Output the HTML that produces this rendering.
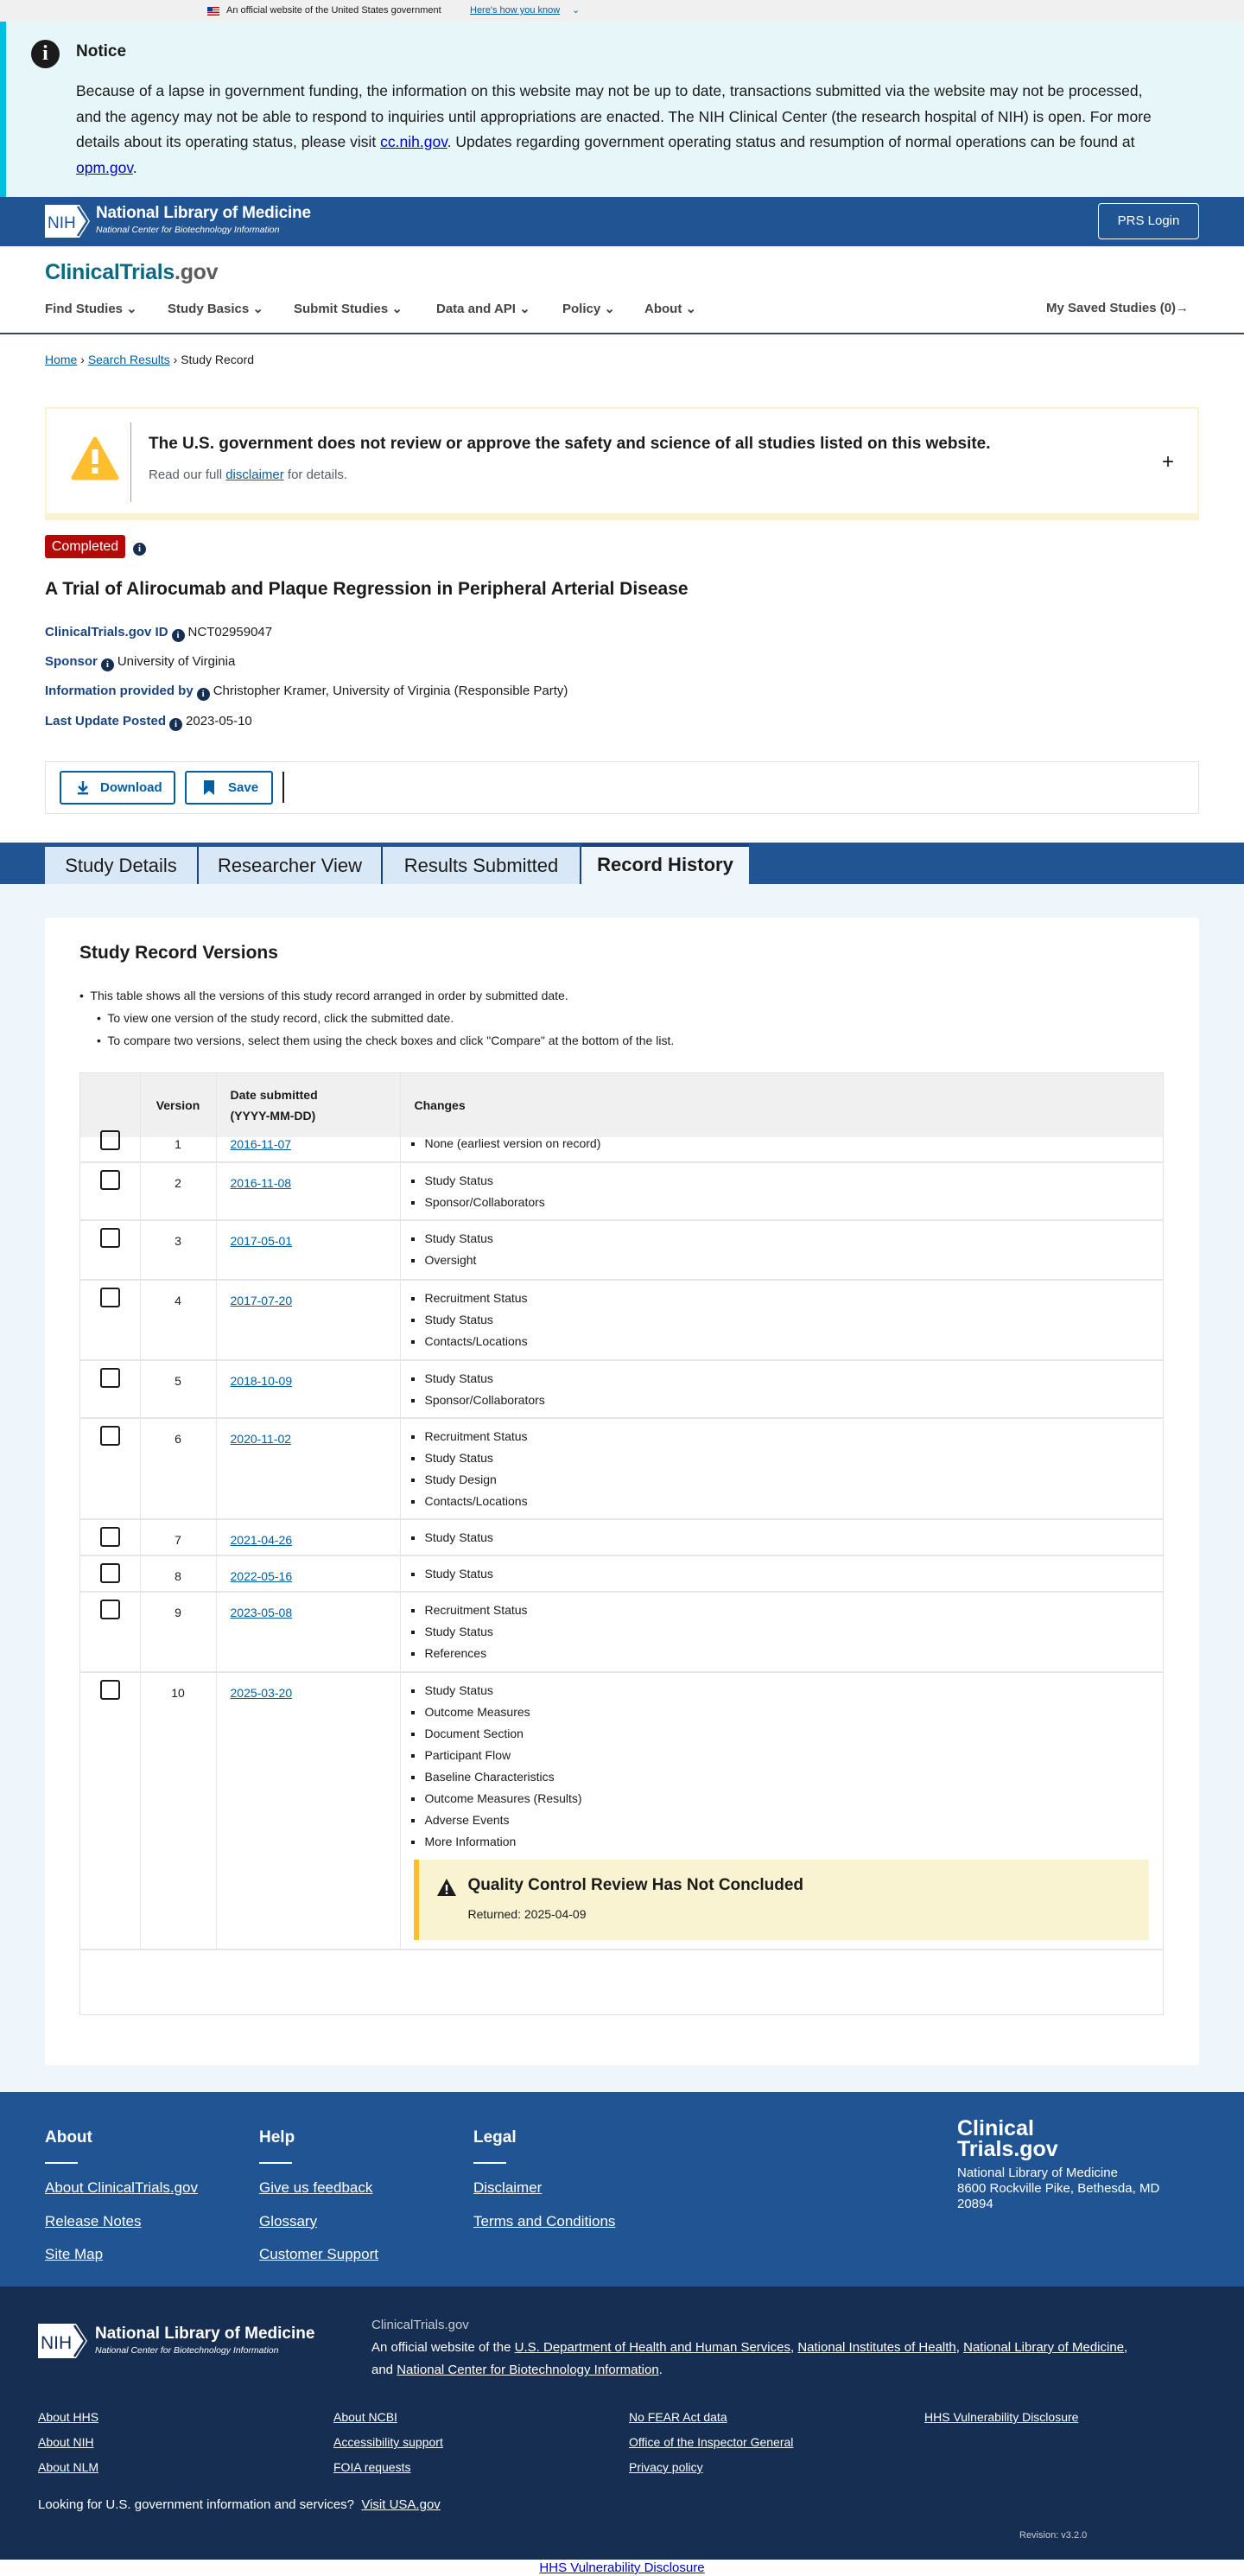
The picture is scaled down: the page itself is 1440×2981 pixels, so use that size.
<!DOCTYPE html>
<html><head><meta charset="utf-8">
<style>
*{box-sizing:border-box;margin:0;padding:0}
body{width:1440px;height:2981px;position:relative;font-family:"Liberation Sans",Arial,sans-serif;color:#1b1b1b;background:#fff;overflow:hidden}
.abs{position:absolute}
a{color:#005ea2}
.gov{left:0;top:0;width:1440px;height:25px;background:#f0f0f0;font-size:11px;line-height:25px}
.notice{left:0;top:25px;width:1440px;height:203px;background:#e7f6f8;border-left:7px solid #00bde3}
.nih{left:0;top:228px;width:1440px;height:57px;background:#205493}
.nav{font-size:15px;font-weight:bold;color:#454545}
.lbl{color:#1a4480;font-weight:bold;font-size:15px}
.ii{display:inline-block;width:15px;height:15px;border-radius:50%;background:#162e51;color:#fff;font-size:11px;line-height:15px;text-align:center;font-weight:bold;font-family:"Liberation Serif",serif;vertical-align:-2px;margin:0 4px}
.tab{position:absolute;top:980px;height:43px;background:#d9e8f6;border-right:2px solid #1a4480;font-size:22px;line-height:43px;text-align:center;color:#1b1b1b}
table{border-collapse:collapse;table-layout:fixed}
td,th{vertical-align:top;border-right:1px solid #e6e6e6;font-size:14px}
tr.r td{border-bottom:2px solid #e6e6e6}
td ul{list-style:none;padding:8px 0 0 28px}
td li{line-height:25px;position:relative;font-size:14px}
td li:before{content:"";position:absolute;left:-16px;top:11px;width:4px;height:4px;background:#1b1b1b}
.cb{width:23px;height:23px;border:2px solid #1b1b1b;border-radius:3px;margin:8px 0 0 23px}
.vn{text-align:center;padding-top:15px}
.dt{padding:15px 0 0 16px}
.dt a{color:#005ea2}
.fl a{color:#fff;font-size:17px}
.fd a{color:#fff;font-size:14px}
</style></head><body>

<div class="abs gov"><span style="position:absolute;left:240px;top:8px;width:14px;height:10px;background:repeating-linear-gradient(#c00 0 1.4px,#fff 1.4px 2.8px)"><span style="position:absolute;left:0;top:0;width:6px;height:5px;background:#1a3a8a"></span></span><span style="position:absolute;left:262px">An official website of the United States government</span><span style="position:absolute;left:544px;color:#005ea2;text-decoration:underline">Here's how you know</span><span style="position:absolute;left:662px;color:#005ea2">⌄</span></div>

<div class="abs notice">
 <div class="abs" style="left:29px;top:21px;width:33px;height:33px;border-radius:50%;background:#1b1b1b;color:#fff;text-align:center;font:bold 24px/33px 'Liberation Serif',serif">i</div>
 <div class="abs" style="left:81px;top:24px;font-size:19px;font-weight:bold">Notice</div>
 <div class="abs" style="left:81px;top:66px;width:1268px;font-size:17.5px;line-height:29.5px">Because of a lapse in government funding, the information on this website may not be up to date, transactions submitted via the website may not be processed, and the agency may not be able to respond to inquiries until appropriations are enacted. The NIH Clinical Center (the research hospital of NIH) is open. For more details about its operating status, please visit <a href="#" style="color:#0000cc">cc.nih.gov</a>. Updates regarding government operating status and resumption of normal operations can be found at <a href="#" style="color:#0000cc">opm.gov</a>.</div>
</div>

<div class="abs nih">
 <svg class="abs" style="left:52px;top:9px" width="54" height="38" viewBox="0 0 54 38"><path d="M0 0H40L52 19L40 38H0Z" fill="#fff"/><path d="M38 2L49 19L38 36" stroke="#205493" stroke-width="2.5" fill="none"/><text x="3" y="27" font-family="Liberation Sans" font-size="19" fill="#205493">NIH</text></svg>
 <div class="abs" style="left:111px;top:8px;color:#fff;font-size:19px;font-weight:bold;letter-spacing:-.2px">National Library of Medicine</div>
 <div class="abs" style="left:111px;top:32px;color:#fff;font-size:10.5px;font-style:italic">National Center for Biotechnology Information</div>
 <div class="abs" style="left:1271px;top:7px;width:117px;height:42px;border:1.5px solid #fff;border-radius:4px;color:#fff;font-size:15px;text-align:center;line-height:39px">PRS Login</div>
</div>

<div class="abs" style="left:52px;top:301px;font-size:25px;font-weight:bold;color:#0b6a80;letter-spacing:-.3px">ClinicalTrials<span style="color:#5c5c5c;font-weight:bold">.gov</span></div>
<div class="abs nav" style="left:52px;top:348px">Find Studies ⌄</div>
<div class="abs nav" style="left:194px;top:348px">Study Basics ⌄</div>
<div class="abs nav" style="left:340px;top:348px">Submit Studies ⌄</div>
<div class="abs nav" style="left:505px;top:348px">Data and API ⌄</div>
<div class="abs nav" style="left:651px;top:348px">Policy ⌄</div>
<div class="abs nav" style="left:746px;top:348px">About ⌄</div>
<div class="abs nav" style="left:1211px;top:348px">My Saved Studies (0)→</div>
<div class="abs" style="left:0;top:385px;width:1440px;height:2px;background:#3d4551"></div>
<div class="abs" style="left:52px;top:408px;font-size:14px"><a href="#">Home</a> › <a href="#">Search Results</a> › Study Record</div>

<div class="abs" style="left:52px;top:471px;width:1336px;height:131px;border:2px solid #faf3d1;border-bottom:8px solid #faf3d1;background:#fff">
 <svg class="abs" style="left:28px;top:32px" width="56" height="52" viewBox="0 0 56 52"><path d="M28 3L53 48H3Z" fill="#ffbe2e" stroke="#ffbe2e" stroke-width="5" stroke-linejoin="round"/><rect x="24.5" y="15" width="7" height="17" fill="#fff"/><rect x="24.5" y="36" width="7" height="7" fill="#fff"/></svg>
 <div class="abs" style="left:97px;top:16px;width:1px;height:92px;background:#e5a000"></div>
 <div class="abs" style="left:118px;top:30px;font-size:19px;font-weight:bold">The U.S. government does not review or approve the safety and science of all studies listed on this website.</div>
 <div class="abs" style="left:118px;top:68px;font-size:15px;color:#565c65">Read our full <a href="#" style="color:#005ea2">disclaimer</a> for details.</div>
 <div class="abs" style="left:1291px;top:48px;font-size:24px">+</div>
</div>

<div class="abs" style="left:52px;top:619px;width:93px;height:27px;background:#b50909;border-radius:3px;color:#fff;font-size:16px;line-height:27px;text-align:center">Completed</div>
<div class="abs" style="left:150px;top:623px"><span class="ii">i</span></div>
<div class="abs" style="left:52px;top:670px;font-size:21px;font-weight:bold;color:#1b1b1b">A Trial of Alirocumab and Plaque Regression in Peripheral Arterial Disease</div>
<div class="abs" style="left:52px;top:723px;font-size:15px"><span class="lbl">ClinicalTrials.gov ID</span><span class="ii">i</span>NCT02959047</div>
<div class="abs" style="left:52px;top:757px;font-size:15px"><span class="lbl">Sponsor</span><span class="ii">i</span>University of Virginia</div>
<div class="abs" style="left:52px;top:791px;font-size:15px"><span class="lbl">Information provided by</span><span class="ii">i</span>Christopher Kramer, University of Virginia (Responsible Party)</div>
<div class="abs" style="left:52px;top:826px;font-size:15px"><span class="lbl">Last Update Posted</span><span class="ii">i</span>2023-05-10</div>

<div class="abs" style="left:52px;top:881px;width:1336px;height:61px;border:1px solid #dfe1e2"></div>
<div class="abs" style="left:69px;top:892px;width:134px;height:39px;border:2px solid #005ea2;border-radius:3px;color:#005ea2;font-size:15px;font-weight:bold;line-height:35px;padding-left:45px">Download</div>
<svg class="abs" style="left:89px;top:903px" width="14" height="17" viewBox="0 0 14 17"><path d="M7 1V11M2 7L7 12L12 7" stroke="#005ea2" stroke-width="2.4" fill="none"/><rect x="1" y="14" width="12" height="2.4" fill="#005ea2"/></svg>
<div class="abs" style="left:214px;top:892px;width:102px;height:39px;border:2px solid #005ea2;border-radius:3px;color:#005ea2;font-size:15px;font-weight:bold;line-height:35px;padding-left:48px">Save</div>
<svg class="abs" style="left:236px;top:903px" width="12" height="17" viewBox="0 0 12 17"><path d="M0 0H12V17L6 12L0 17Z" fill="#005ea2"/></svg>
<div class="abs" style="left:327px;top:893px;width:2px;height:36px;background:#1b1b1b"></div>

<div class="abs" style="left:0;top:975px;width:1440px;height:48px;background:#205493"></div>
<div class="abs" style="left:0;top:1023px;width:1440px;height:1398px;background:#eff6fb"></div>
<div class="tab" style="left:52px;width:178px">Study Details</div>
<div class="tab" style="left:230px;width:213px">Researcher View</div>
<div class="tab" style="left:443px;width:230px">Results Submitted</div>
<div class="abs" style="left:673px;top:976px;width:194px;height:48px;background:#eff6fb;border-top:4px solid #1a4480;font-size:22px;font-weight:bold;line-height:42px;text-align:center">Record History</div>

<div class="abs" style="left:52px;top:1062px;width:1336px;height:1328px;background:#fff;border-radius:4px">
 <div class="abs" style="left:40px;top:29px;font-size:21px;font-weight:bold">Study Record Versions</div>
 <div class="abs" style="left:40px;top:77px;font-size:14px;line-height:26px">
  <div>•&nbsp; This table shows all the versions of this study record arranged in order by submitted date.</div>
  <div style="padding-left:20px">•&nbsp; To view one version of the study record, click the submitted date.</div>
  <div style="padding-left:20px">•&nbsp; To compare two versions, select them using the check boxes and click "Compare" at the bottom of the list.</div>
 </div>
 <div class="abs" style="left:40px;top:179px;width:1255px;height:1091px;border:1px solid #dfe1e2;overflow:hidden">
 <table style="width:1254px">
  <colgroup><col style="width:69px"><col style="width:88px"><col style="width:213px"><col></colgroup>
  <tr style="height:74px;background:#f0f0f0"><th></th><th style="vertical-align:middle;text-align:center">Version</th><th style="vertical-align:middle;text-align:left;padding-left:16px;line-height:24px">Date submitted<br>(YYYY-MM-DD)</th><th style="vertical-align:middle;text-align:left;padding-left:16px;border-right:0">Changes</th></tr>
  <tr class="r" style="height:29px"><td><div class="cb" style="margin-top:-8px"></div></td><td class="vn" style="padding-top:0">1</td><td class="dt" style="padding-top:0"><a href="#">2016-11-07</a></td><td><ul style="padding-top:0"><li style="margin-top:-5px">None (earliest version on record)</li></ul></td></tr>
  <tr class="r" style="height:67px"><td><div class="cb"></div></td><td class="vn">2</td><td class="dt"><a href="#">2016-11-08</a></td><td><ul><li>Study Status</li><li>Sponsor/Collaborators</li></ul></td></tr>
  <tr class="r" style="height:69px"><td><div class="cb"></div></td><td class="vn">3</td><td class="dt"><a href="#">2017-05-01</a></td><td><ul><li>Study Status</li><li>Oversight</li></ul></td></tr>
  <tr class="r" style="height:93px"><td><div class="cb"></div></td><td class="vn">4</td><td class="dt"><a href="#">2017-07-20</a></td><td><ul><li>Recruitment Status</li><li>Study Status</li><li>Contacts/Locations</li></ul></td></tr>
  <tr class="r" style="height:67px"><td><div class="cb"></div></td><td class="vn">5</td><td class="dt"><a href="#">2018-10-09</a></td><td><ul><li>Study Status</li><li>Sponsor/Collaborators</li></ul></td></tr>
  <tr class="r" style="height:117px"><td><div class="cb"></div></td><td class="vn">6</td><td class="dt"><a href="#">2020-11-02</a></td><td><ul><li>Recruitment Status</li><li>Study Status</li><li>Study Design</li><li>Contacts/Locations</li></ul></td></tr>
  <tr class="r" style="height:42px"><td><div class="cb"></div></td><td class="vn">7</td><td class="dt"><a href="#">2021-04-26</a></td><td><ul><li>Study Status</li></ul></td></tr>
  <tr class="r" style="height:42px"><td><div class="cb"></div></td><td class="vn">8</td><td class="dt"><a href="#">2022-05-16</a></td><td><ul><li>Study Status</li></ul></td></tr>
  <tr class="r" style="height:93px"><td><div class="cb"></div></td><td class="vn">9</td><td class="dt"><a href="#">2023-05-08</a></td><td><ul><li>Recruitment Status</li><li>Study Status</li><li>References</li></ul></td></tr>
  <tr class="r" style="height:321px"><td><div class="cb"></div></td><td class="vn">10</td><td class="dt"><a href="#">2025-03-20</a></td><td><ul><li>Study Status</li><li>Outcome Measures</li><li>Document Section</li><li>Participant Flow</li><li>Baseline Characteristics</li><li>Outcome Measures (Results)</li><li>Adverse Events</li><li>More Information</li></ul>
   <div style="margin:8px 16px 0 15px;height:93px;background:#faf3d1;border-left:6px solid #ffbe2e;position:relative">
    <svg style="position:absolute;left:20px;top:21px" width="24" height="22" viewBox="0 0 24 22"><path d="M12 1L23 21H1Z" fill="#1b1b1b"/><rect x="10.8" y="8" width="2.4" height="7" fill="#fff"/><rect x="10.8" y="16.5" width="2.4" height="2.4" fill="#fff"/></svg>
    <div style="position:absolute;left:57px;top:19px;font-size:19px;font-weight:bold">Quality Control Review Has Not Concluded</div>
    <div style="position:absolute;left:57px;top:55px;font-size:14px">Returned: 2025-04-09</div>
   </div></td></tr>
 </table>
 </div>
</div>

<div class="abs fl" style="left:0;top:2421px;width:1440px;height:225px;background:#205493;color:#fff">
 <div class="abs" style="left:52px;top:42px;font-size:19px;font-weight:bold">About</div>
 <div class="abs" style="left:300px;top:42px;font-size:19px;font-weight:bold">Help</div>
 <div class="abs" style="left:548px;top:42px;font-size:19px;font-weight:bold">Legal</div>
 <div class="abs" style="left:52px;top:81px;width:38px;height:2px;background:#fff"></div>
 <div class="abs" style="left:300px;top:81px;width:38px;height:2px;background:#fff"></div>
 <div class="abs" style="left:548px;top:81px;width:38px;height:2px;background:#fff"></div>
 <div class="abs" style="left:52px;top:92px;line-height:37.5px"><a href="#">About ClinicalTrials.gov</a><br><a href="#">Release Notes</a><br><a href="#">Site Map</a></div>
 <div class="abs" style="left:300px;top:92px;line-height:37.5px"><a href="#">Give us feedback</a><br><a href="#">Glossary</a><br><a href="#">Customer Support</a></div>
 <div class="abs" style="left:548px;top:92px;line-height:37.5px"><a href="#">Disclaimer</a><br><a href="#">Terms and Conditions</a></div>
 <div class="abs" style="left:1108px;top:30px;font-size:25px;font-weight:bold;line-height:24px">Clinical<br>Trials.gov</div>
 <div class="abs" style="left:1108px;top:85px;font-size:15px;line-height:18px">National Library of Medicine<br>8600 Rockville Pike, Bethesda, MD<br>20894</div>
</div>

<div class="abs fd" style="left:0;top:2646px;width:1440px;height:316px;background:#162e51;color:#fff">
 <svg class="abs" style="left:44px;top:43px" width="60" height="40" viewBox="0 0 60 40"><path d="M0 0H44L57 20L44 40H0Z" fill="#fff"/><path d="M42 2L54 20L42 38" stroke="#162e51" stroke-width="2.5" fill="none"/><text x="3" y="29" font-family="Liberation Sans" font-size="21" fill="#162e51">NIH</text></svg>
 <div class="abs" style="left:110px;top:44px;font-size:19px;font-weight:bold">National Library of Medicine</div>
 <div class="abs" style="left:110px;top:68px;font-size:10.5px;font-style:italic">National Center for Biotechnology Information</div>
 <div class="abs" style="left:430px;top:36px;font-size:15px;color:#c9ccd4">ClinicalTrials.gov</div>
 <div class="abs" style="left:430px;top:58px;width:940px;font-size:15px;line-height:26px">An official website of the <a href="#" style="font-size:15px">U.S. Department of Health and Human Services</a>, <a href="#" style="font-size:15px">National Institutes of Health</a>, <a href="#" style="font-size:15px">National Library of Medicine</a>,<br>and <a href="#" style="font-size:15px">National Center for Biotechnology Information</a>.</div>
 <div class="abs" style="left:44px;top:137px;line-height:29px"><a href="#">About HHS</a><br><a href="#">About NIH</a><br><a href="#">About NLM</a></div>
 <div class="abs" style="left:386px;top:137px;line-height:29px"><a href="#">About NCBI</a><br><a href="#">Accessibility support</a><br><a href="#">FOIA requests</a></div>
 <div class="abs" style="left:728px;top:137px;line-height:29px"><a href="#">No FEAR Act data</a><br><a href="#">Office of the Inspector General</a><br><a href="#">Privacy policy</a></div>
 <div class="abs" style="left:1070px;top:137px;line-height:29px"><a href="#">HHS Vulnerability Disclosure</a></div>
 <div class="abs" style="left:44px;top:244px;font-size:15px">Looking for U.S. government information and services?&nbsp; <a href="#" style="font-size:15px">Visit USA.gov</a></div>
 <div class="abs" style="left:1180px;top:282px;font-size:11px;color:#c9ccd4">Revision: v3.2.0</div>
</div>
<div class="abs" style="left:0;top:2962px;width:1440px;text-align:center;font-size:15px;line-height:19px"><a href="#" style="color:#0000cc">HHS Vulnerability Disclosure</a></div>
</body></html>
